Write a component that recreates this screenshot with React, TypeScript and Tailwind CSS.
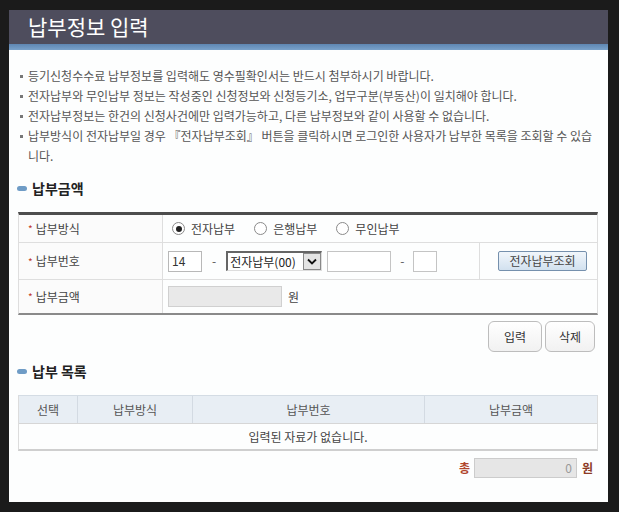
import React from "react";

function Radio({ checked, label }: { checked?: boolean; label: string }) {
  return (
    <div className="flex items-center">
      <span className="flex h-[13px] w-[13px] items-center justify-center rounded-full border border-[#8a8a8a] bg-white">
        {checked && <span className="h-[6px] w-[6px] rounded-full bg-[#222]" />}
      </span>
      <span className="ml-[6px] text-[#444]">{label}</span>
    </div>
  );
}

function SectionTitle({ text }: { text: string }) {
  return (
    <div className="flex h-[20px] items-center">
      <span className="-ml-[1px] h-[5px] w-[10px] rounded-full bg-[#6f9cc6]" />
      <span className="ml-[5px] text-[14px] font-bold text-[#222]">{text}</span>
    </div>
  );
}

function Label({ text }: { text: string }) {
  return (
    <div className="flex w-[144px] shrink-0 items-center border-r border-[#dedede] bg-[#fbfbfb] pl-[9px] text-[#444]">
      <span className="mr-[3px] text-[10px] text-[#c0392b]">*</span>
      <span>{text}</span>
    </div>
  );
}

const bullets = [
  "등기신청수수료 납부정보를 입력해도 영수필확인서는 반드시 첨부하시기 바랍니다.",
  "전자납부와 무인납부 정보는 작성중인 신청정보와 신청등기소, 업무구분(부동산)이 일치해야 합니다.",
  "전자납부정보는 한건의 신청사건에만 입력가능하고, 다른 납부정보와 같이 사용할 수 없습니다.",
  "납부방식이 전자납부일 경우 『전자납부조회』 버튼을 클릭하시면 로그인한 사용자가 납부한 목록을 조회할 수 있습니다.",
];

export default function App() {
  return (
    <div className="h-[512px] w-[619px] bg-[#1b1b1b] pb-[10px] pl-[9px] pr-[11px] pt-[10px] font-['Noto_Sans_CJK_KR',sans-serif] text-[12px]">
      <div className="flex h-full flex-col bg-[#fdfefe]">
        <div className="flex h-[34px] items-center bg-[#4e4d5d] pl-[19px] text-[21px] text-white">
          납부정보 입력
        </div>
        <div className="h-[6px] bg-gradient-to-b from-[#5e86b2] to-[#7aa2ca]" />

        <div className="flex flex-col pl-[9px] pr-[10px]">
          <ul className="mt-[16px] leading-[20px] text-[#555]">
            {bullets.map((b, i) => (
              <li key={i} className="flex">
                <span className="flex h-[20px] w-[10px] shrink-0 items-center pl-[2px]">
                  <span className="h-[3px] w-[3px] bg-[#777]" />
                </span>
                <span className="break-all">{b}</span>
              </li>
            ))}
          </ul>

          <div className="mt-[12px]">
            <SectionTitle text="납부금액" />
          </div>

          <div className="mt-[14px] border-x border-b-2 border-t-[3px] border-x-[#dedede] border-b-[#8a8a8a] border-t-[#4d4d4d]">
            <div className="flex h-[28px] border-b border-[#dedede]">
              <Label text="납부방식" />
              <div className="flex flex-1 items-center gap-[19px] pl-[9px]">
                <Radio checked label="전자납부" />
                <Radio label="은행납부" />
                <Radio label="무인납부" />
              </div>
            </div>
            <div className="flex h-[37px] border-b border-[#dedede]">
              <Label text="납부번호" />
              <div className="flex flex-1 items-center pl-[5px]">
                <div className="flex h-[21px] w-[34px] items-center border border-[#b8b8b8] bg-white pl-[3px] text-[#333]">14</div>
                <span className="mx-[10px] text-[#555]">-</span>
                <div className="flex h-[20px] w-[96px] items-stretch border-b border-l-2 border-r border-t-2 border-b-[#ddd] border-l-[#666] border-r-[#ddd] border-t-[#666] bg-white">
                  <span className="flex flex-1 items-center pl-[2px] text-[12px] text-[#222]">전자납부(00)</span>
                  <span className="flex w-[18px] items-center justify-center border border-[#888] bg-[#e4e4e4]">
                    <svg width="10" height="7" viewBox="0 0 10 7">
                      <path d="M1 1.5 L5 5.5 L9 1.5" stroke="#111" strokeWidth="1.8" fill="none" />
                    </svg>
                  </span>
                </div>
                <div className="ml-[5px] h-[21px] w-[64px] border border-[#c4c4c4] bg-white" />
                <span className="mx-[9px] text-[#555]">-</span>
                <div className="h-[21px] w-[24px] border border-[#c4c4c4] bg-white" />
                <div className="ml-auto flex h-full w-[118px] items-center border-l border-[#dedede] pl-[18px]">
                  <button className="h-[20px] w-[89px] rounded-[2px] border border-[#7590ad] bg-gradient-to-b from-[#f1f6fb] to-[#d2e1ef] text-[12px] text-[#444]">
                    전자납부조회
                  </button>
                </div>
              </div>
            </div>
            <div className="flex h-[33px]">
              <Label text="납부금액" />
              <div className="flex flex-1 items-center pl-[5px]">
                <div className="h-[21px] w-[114px] border border-[#d0d0d0] bg-[#e9e9e9]" />
                <span className="ml-[6px] text-[#444]">원</span>
              </div>
            </div>
          </div>

          <div className="mt-[6px] flex justify-end gap-[3px] pr-[3px]">
            <button className="h-[31px] w-[54px] rounded-[6px] border border-[#bdbdbd] bg-gradient-to-b from-white to-[#f1f1f1] text-[#333]">입력</button>
            <button className="h-[31px] w-[50px] rounded-[6px] border border-[#bdbdbd] bg-gradient-to-b from-white to-[#f1f1f1] text-[#333]">삭제</button>
          </div>

          <div className="mt-[9px]">
            <SectionTitle text="납부 목록" />
          </div>

          <div className="mt-[14px] border-x border-b-2 border-t border-x-[#dcdcdc] border-b-[#cfcfcf] border-t-[#d4dce4]">
            <div className="flex h-[28px] border-b border-[#d6d6d6] bg-[#e8eef4] text-[#555]">
              <div className="flex w-[59px] items-center justify-center border-r border-[#d3dae2]">선택</div>
              <div className="flex w-[115px] items-center justify-center border-r border-[#d3dae2]">납부방식</div>
              <div className="flex w-[232px] items-center justify-center border-r border-[#d3dae2]">납부번호</div>
              <div className="flex flex-1 items-center justify-center">납부금액</div>
            </div>
            <div className="flex h-[25px] items-center justify-center text-[#444]">입력된 자료가 없습니다.</div>
          </div>

          <div className="mt-[7px] flex items-center justify-end pr-[5px]">
            <span className="text-[12px] font-bold text-[#b0452c]">총</span>
            <div className="ml-[4px] flex h-[20px] w-[103px] items-center justify-end border border-[#cccccc] bg-[#e6e6e6] pr-[4px] text-[#999]">0</div>
            <span className="ml-[5px] text-[12px] font-bold text-[#8c3b26]">원</span>
          </div>
        </div>
      </div>
    </div>
  );
}
